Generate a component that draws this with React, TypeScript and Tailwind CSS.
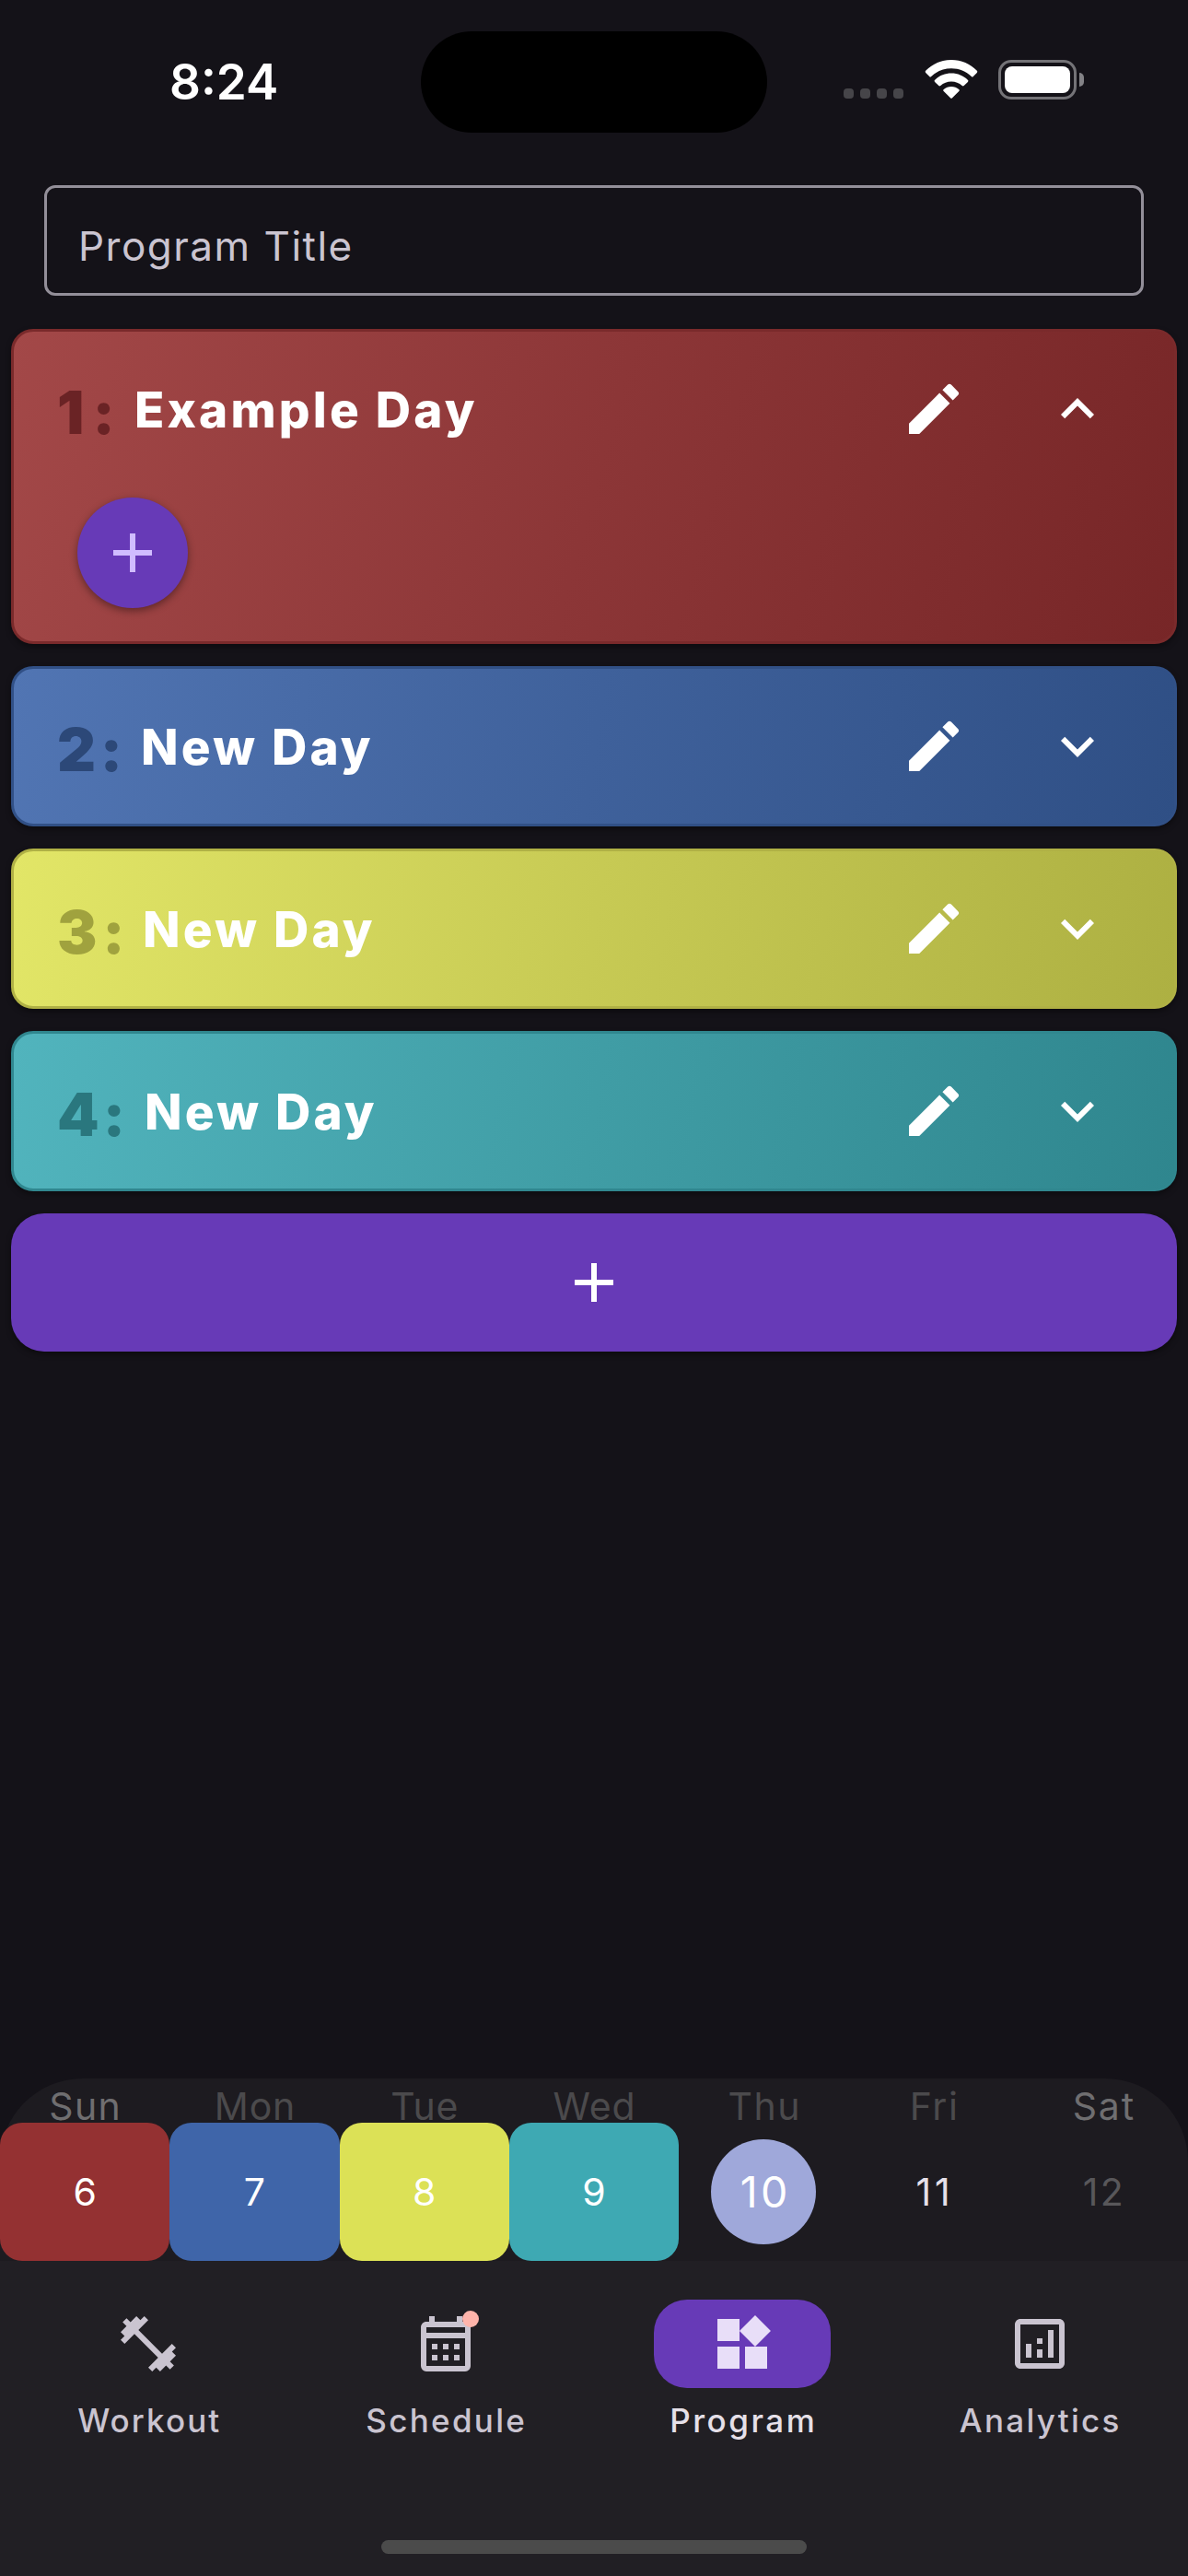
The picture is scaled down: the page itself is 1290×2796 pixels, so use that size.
import type { ReactNode } from "react";

const PATHS = {
  edit: "M3 17.25V21h3.75L17.81 9.94l-3.75-3.75L3 17.25zM20.71 7.04a.996.996 0 0 0 0-1.41l-2.34-2.34a.996.996 0 0 0-1.41 0l-1.83 1.83 3.75 3.75 1.83-1.83z",
  expandMore: "M16.59 8.59L12 13.17 7.41 8.59 6 10l6 6 6-6z",
  expandLess: "M12 8l-6 6 1.41 1.41L12 10.83l4.59 4.58L18 14z",
  add: "M19 13h-6v6h-2v-6H5v-2h6V5h2v6h6v2z",
  dumbbell:
    "M20.57 14.86L22 13.43 20.57 12 17 15.57 8.43 7 12 3.43 10.57 2 9.14 3.43 7.71 2 5.57 4.14 4.14 2.71 2.71 4.14l1.43 1.43L2 7.71l1.43 1.43L2 10.57 3.43 12 7 8.43 15.57 17 12 20.57 13.43 22l1.43-1.43L16.29 22l2.14-2.14 1.43 1.43 1.43-1.43-1.43-1.43L22 16.29z",
  calendar:
    "M19 4h-1V2h-2v2H8V2H6v2H5c-1.11 0-1.99.9-1.99 2L3 20a2 2 0 0 0 2 2h14c1.1 0 2-.9 2-2V6c0-1.1-.9-2-2-2zm0 16H5V10h14v10zm0-12H5V6h14v2zM9 14H7v-2h2v2zm4 0h-2v-2h2v2zm4 0h-2v-2h2v2zm-8 4H7v-2h2v2zm4 0h-2v-2h2v2zm4 0h-2v-2h2v2z",
  widgets:
    "M13 13v8h8v-8h-8zM3 21h8v-8H3v8zM3 3v8h8V3H3zm13.66-1.31L11 7.34 16.66 13l5.66-5.66-5.66-5.65z",
  analytics:
    "M19 3H5c-1.1 0-2 .9-2 2v14c0 1.1.9 2 2 2h14c1.1 0 2-.9 2-2V5c0-1.1-.9-2-2-2zm0 16H5V5h14v14zM7 12h2v5H7v-5zm8-5h2v10h-2V7zm-4 7h2v3h-2v-3zm0-4h2v2h-2v-2z",
};

function Icon({ name, className = "" }: { name: keyof typeof PATHS; className?: string }) {
  return (
    <svg viewBox="0 0 24 24" className={`size-[72px] shrink-0 fill-current ${className}`}>
      <path d={PATHS[name]} />
    </svg>
  );
}

function StatusBar() {
  return (
    <header className="flex h-[201px] shrink-0 items-start">
      <div className="mt-[63px] w-[457px] pl-[184px] text-[53px] leading-[52px] font-[560] text-white">
        8:24
      </div>
      <div className="mt-[34px] h-[110px] w-[376px] rounded-full bg-black" />
      <div className="ml-[83px] flex">
        <div className="mt-[96px] flex gap-[7px]">
          {[0, 1, 2, 3].map((n) => (
            <div key={n} className="size-[11px] rounded-[4px] bg-[#464549]" />
          ))}
        </div>
        <svg viewBox="0 0 58 43" className="mt-[65px] ml-[23px] h-[43px] w-[58px] fill-white">
          <path d="M29 0C40 0 49.5 4.300 56.600 11.500C57.500 12.400 57.500 13.100 56.800 13.900L52.800 18C52.100 18.700 51.500 18.700 50.800 18C45 12.400 37.500 9.200 29 9.200C20.500 9.200 13 12.400 7.200 18C6.500 18.700 5.900 18.700 5.200 18L1.200 13.900C.5 13.100 .5 12.400 1.400 11.500C8.500 4.300 18 0 29 0Z" />
          <path d="M29 14.600C36 14.600 42.200 17.300 46.800 21.700C47.600 22.500 47.600 23.100 46.900 23.900L42.700 28.100C42 28.800 41.400 28.700 40.700 28.100C37.500 25.300 33.500 23.600 29 23.600C24.500 23.600 20.500 25.300 17.300 28.100C16.600 28.700 16 28.800 15.300 28.100L11.100 23.900C10.400 23.100 10.400 22.500 11.200 21.700C15.800 17.300 22 14.600 29 14.600Z" />
          <path d="M29 28.900C32.200 28.900 35 30 37.200 31.900C38 32.600 38 33.200 37.300 33.900L30 41.300C29.300 42 28.700 42 28 41.300L20.700 33.900C20 33.200 20 32.600 20.800 31.900C23 30 25.800 28.900 29 28.900Z" />
        </svg>
        <div className="mt-[65px] ml-[22px] h-[43px] w-[85px] rounded-[14px] border-[3px] border-[#747377] p-1">
          <div className="size-full rounded-[8px] bg-white" />
        </div>
        <div className="mt-[79px] ml-[3px] h-[15px] w-[5px] rounded-r-full bg-[#838286]" />
      </div>
    </header>
  );
}

type Day = { n: number; title: string; open?: boolean; card: string; number: string };

const DAYS: Day[] = [
  {
    n: 1,
    title: "Example Day",
    open: true,
    card: "h-[342px] border-[#7a2a2b] bg-[linear-gradient(105.1deg,#a34848,#8c3637_50%,#772627)]",
    number: "w-[84px] tracking-[9px] text-[#6a2325]",
  },
  {
    n: 2,
    title: "New Day",
    card: "h-[174px] border-[#315086] bg-[linear-gradient(97.8deg,#5175b3,#3f619b_50%,#2f4f85)]",
    number: "w-[91px] tracking-[4.6px] text-[#2c4878]",
  },
  {
    n: 3,
    title: "New Day",
    card: "h-[174px] border-[#b0b145] bg-[linear-gradient(97.8deg,#e2e667,#c7ca54_50%,#adb042)]",
    number: "w-[93px] tracking-[5.700px] text-[#a0a23e]",
  },
  {
    n: 4,
    title: "New Day",
    card: "h-[174px] border-[#30878f] bg-[linear-gradient(97.8deg,#51b4bd,#409da5_50%,#2f868e)]",
    number: "w-[95px] tracking-[4.1px] text-[#2a777e]",
  },
];

function DayCard({ day }: { day: Day }) {
  return (
    <section
      className={`rounded-[24px] border-[3px] bg-origin-border shadow-[0_3px_6px_rgba(0,0,0,0.4)] ${day.card}`}
    >
      <div className="flex h-[168px] items-center pr-[69px] pl-[47px]">
        <span className={`pt-[7px] text-[65px] leading-[64px] font-black ${day.number}`}>{day.n}:</span>
        <span className="flex-1 pt-[2px] text-[53px] leading-[64px] font-extrabold tracking-[3.2px] text-white">
          {day.title}
        </span>
        <Icon name="edit" className="mr-[84px] text-white" />
        <Icon name={day.open ? "expandLess" : "expandMore"} className="text-white" />
      </div>
      {day.open && (
        <button className="mt-[12px] ml-[69px] grid size-[120px] place-items-center rounded-full bg-[#673ab7] text-[#d0bcff] shadow-[0_3px_8px_rgba(0,0,0,0.4)]">
          <Icon name="add" />
        </button>
      )}
    </section>
  );
}

const WEEK = [
  { day: "Sun", date: "6", label: "text-[#6f6e70] tracking-[1.3px] pl-[1px]", cell: "bg-[#943132] text-white" },
  { day: "Mon", date: "7", label: "text-[#4b4a4c] tracking-[0.8px] pl-[1px]", cell: "bg-[#3f65a9] text-white" },
  { day: "Tue", date: "8", label: "text-[#4b4a4c] tracking-[0.8px] pl-[1px]", cell: "bg-[#dce156] text-white" },
  { day: "Wed", date: "9", label: "text-[#4b4a4c] tracking-[0.9px] pl-[1px]", cell: "bg-[#3ea9b3] text-white" },
  { day: "Thu", date: "10", label: "text-[#4b4a4c] tracking-[1.6px] pl-[2px]", cell: "today" },
  { day: "Fri", date: "11", label: "text-[#4b4a4c] tracking-[1.5px] pl-[2px]", cell: "text-[#e6e0e9] tracking-[4px] pl-[3px]" },
  { day: "Sat", date: "12", label: "text-[#6f6e70] tracking-[1.8px] pl-[2px]", cell: "text-[#58575a] tracking-[2.3px] pl-[2px]" },
];

function WeekStrip() {
  return (
    <div className="bg-[#141218]">
      <div className="grid h-[198px] grid-cols-7 rounded-t-[90px] bg-[#1d1b20]">
        {WEEK.map((d) => (
          <div key={d.day} className="flex flex-col text-center text-[41px]">
            <div className={`h-[48px] pt-[12px] leading-[36px] ${d.label}`}>{d.day}</div>
            {d.cell === "today" ? (
              <div className="grid h-[150px] place-items-center">
                <div className="grid size-[114px] place-items-center rounded-full bg-[#9fa8da] pt-[2px] pl-[4px] text-[46.5px] tracking-[3.5px] text-white">
                  {d.date}
                </div>
              </div>
            ) : (
              <div className={`grid h-[150px] place-items-center rounded-[24px] pt-[2px] ${d.cell}`}>{d.date}</div>
            )}
          </div>
        ))}
      </div>
    </div>
  );
}

function NavItem({
  label,
  active = false,
  labelClass,
  children,
}: {
  label: string;
  active?: boolean;
  labelClass: string;
  children: ReactNode;
}) {
  return (
    <div className="flex flex-col items-center pt-[42px]">
      <div
        className={`grid h-[96px] w-[192px] place-items-center rounded-[36px] ${
          active ? "bg-[#673ab7] text-[#e8def8]" : "text-[#cac4d0]"
        }`}
      >
        {children}
      </div>
      <span
        className={`mt-[15px] text-[35px] leading-[40px] font-[450] ${labelClass} ${
          active ? "text-[#e6e0e9]" : "text-[#cac4d0]"
        }`}
      >
        {label}
      </span>
    </div>
  );
}

function BottomNav() {
  return (
    <nav className="flex h-[342px] flex-col bg-[#211f24]">
      <div className="grid h-[303px] grid-cols-4">
        <NavItem label="Workout" labelClass="tracking-[2.1px] pl-[2px]">
          <Icon name="dumbbell" />
        </NavItem>
        <NavItem label="Schedule" labelClass="tracking-[2.3px] pl-[2px]">
          <div className="relative">
            <Icon name="calendar" />
            <div className="absolute top-0 right-0 size-[18px] rounded-full bg-[#ffb4ab]" />
          </div>
        </NavItem>
        <NavItem label="Program" active labelClass="tracking-[2.5px] pl-[2px]">
          <Icon name="widgets" />
        </NavItem>
        <NavItem label="Analytics" labelClass="tracking-[2.3px] pl-[2px]">
          <Icon name="analytics" />
        </NavItem>
      </div>
      <div className="mx-auto h-[15px] w-[462px] rounded-full bg-[#4b4b4b]" />
    </nav>
  );
}

export default function App() {
  return (
    <div className="flex h-[2796px] w-[1290px] flex-col overflow-hidden bg-[#141218] font-[Inter,sans-serif]">
      <StatusBar />
      <div className="mx-[48px] flex h-[120px] shrink-0 items-center rounded-[12px] border-[3px] border-[#938f99] pt-[12px] pl-[34px] text-[44px] tracking-[1.5px] text-[#cac4d0]">
        Program Title
      </div>
      <main className="mt-[36px] flex flex-1 flex-col gap-[24px] px-[12px]">
        {DAYS.map((d) => (
          <DayCard key={d.n} day={d} />
        ))}
        <button className="grid h-[150px] place-items-center rounded-[36px] bg-[#673ab7] text-white shadow-[0_3px_6px_rgba(0,0,0,0.4)]">
          <Icon name="add" />
        </button>
      </main>
      <WeekStrip />
      <BottomNav />
    </div>
  );
}
